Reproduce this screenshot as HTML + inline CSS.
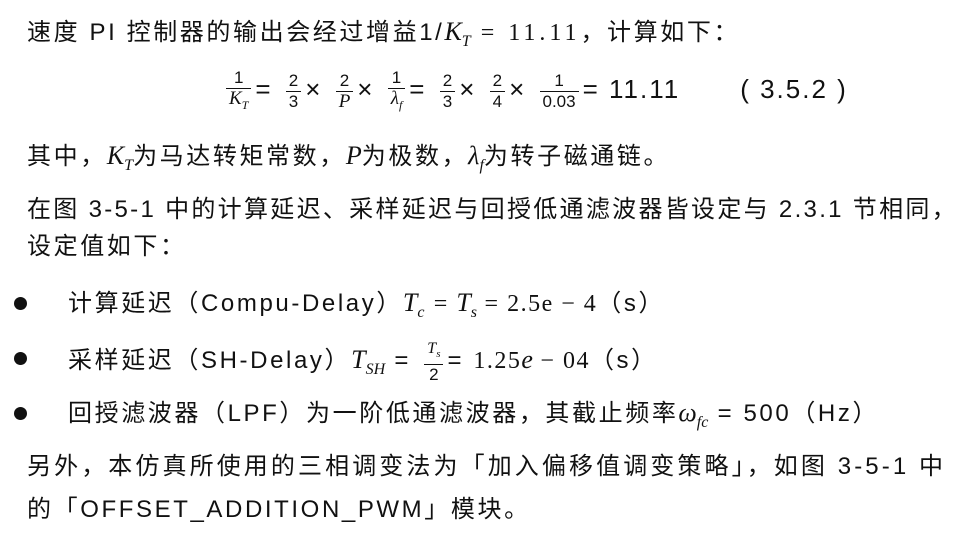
<!DOCTYPE html>
<html><head><meta charset="utf-8"><style>
body{margin:0;width:973px;height:548px;background:#fff;overflow:hidden;font-family:"Liberation Sans","Noto Sans CJK SC",sans-serif;color:#111;font-size:24px;letter-spacing:2.6px}
.l{position:absolute;left:27px;white-space:nowrap;line-height:32px}
i{font-family:"Liberation Serif",serif;font-size:26px;letter-spacing:0}
.m{font-family:"Liberation Serif",serif;letter-spacing:1.5px}
.f{display:inline-block;vertical-align:middle;text-align:center;font-size:17px;line-height:20px;margin:0 4px;letter-spacing:0}
.f span{display:block;padding:0 3px}
.f span:first-child{border-bottom:1.5px solid #111}
.b{position:absolute;left:14px;width:13px;height:13px;border-radius:50%;background:#111}
</style></head><body>
<div class="l" style="top:16px">速度 PI 控制器的输出会经过增益1/<i>K<sub style="font-size:16px">T</sub></i><span class="m" style="letter-spacing:4px"> = 11.11</span>，计算如下：</div>
<div class="l" style="left:222px;top:66px;font-size:26px;line-height:46px;letter-spacing:2px">
<span class="f"><span>1</span><span><i style="font-size:19px">K<sub style="font-size:12px">T</sub></i></span></span>= <span class="f"><span>2</span><span>3</span></span>× <span class="f"><span>2</span><span><i style="font-size:19px">P</i></span></span>× <span class="f"><span>1</span><span><i style="font-size:19px">λ<sub style="font-size:12px">f</sub></i></span></span>= <span class="f"><span>2</span><span>3</span></span>× <span class="f"><span>2</span><span>4</span></span>× <span class="f"><span>1</span><span>0.03</span></span>= 11.11<span style="margin-left:60px">( 3.5.2 )</span></div>
<div class="l" style="top:140px">其中，<i>K<sub style="font-size:16px">T</sub></i>为马达转矩常数，<i>P</i>为极数，<i>λ<sub style="font-size:16px">f</sub></i>为转子磁通链。</div>
<div class="l" style="top:194px;letter-spacing:2.3px">在图 3-5-1 中的计算延迟、采样延迟与回授低通滤波器皆设定与 2.3.1 节相同，</div>
<div class="l" style="top:231px">设定值如下：</div>
<div class="b" style="top:297px"></div>
<div class="l" style="left:68px;top:287px">计算延迟（Compu-Delay）<i>T<sub style="font-size:16px">c</sub></i> <span class="m">= <i>T<sub style="font-size:16px">s</sub></i> = 2.5e − 4</span>（s）</div>
<div class="b" style="top:352px"></div>
<div class="l" style="left:68px;top:338px;line-height:40px">采样延迟（SH-Delay）<i>T<sub style="font-size:16px">SH</sub></i> = <span class="f"><span><i style="font-size:16px">T<sub style="font-size:11px">s</sub></i></span><span>2</span></span>= <span class="m">1.25<i>e</i> − 04</span>（s）</div>
<div class="b" style="top:407px"></div>
<div class="l" style="left:68px;top:397px">回授滤波器（LPF）为一阶低通滤波器，其截止频率<i>ω<sub style="font-size:16px">fc</sub></i> = 500（Hz）</div>
<div class="l" style="top:451px;letter-spacing:3.1px">另外，本仿真所使用的三相调变法为「加入偏移值调变策略」，如图 3-5-1 中</div>
<div class="l" style="top:494px">的「OFFSET_ADDITION_PWM」模块。</div>
</body></html>
